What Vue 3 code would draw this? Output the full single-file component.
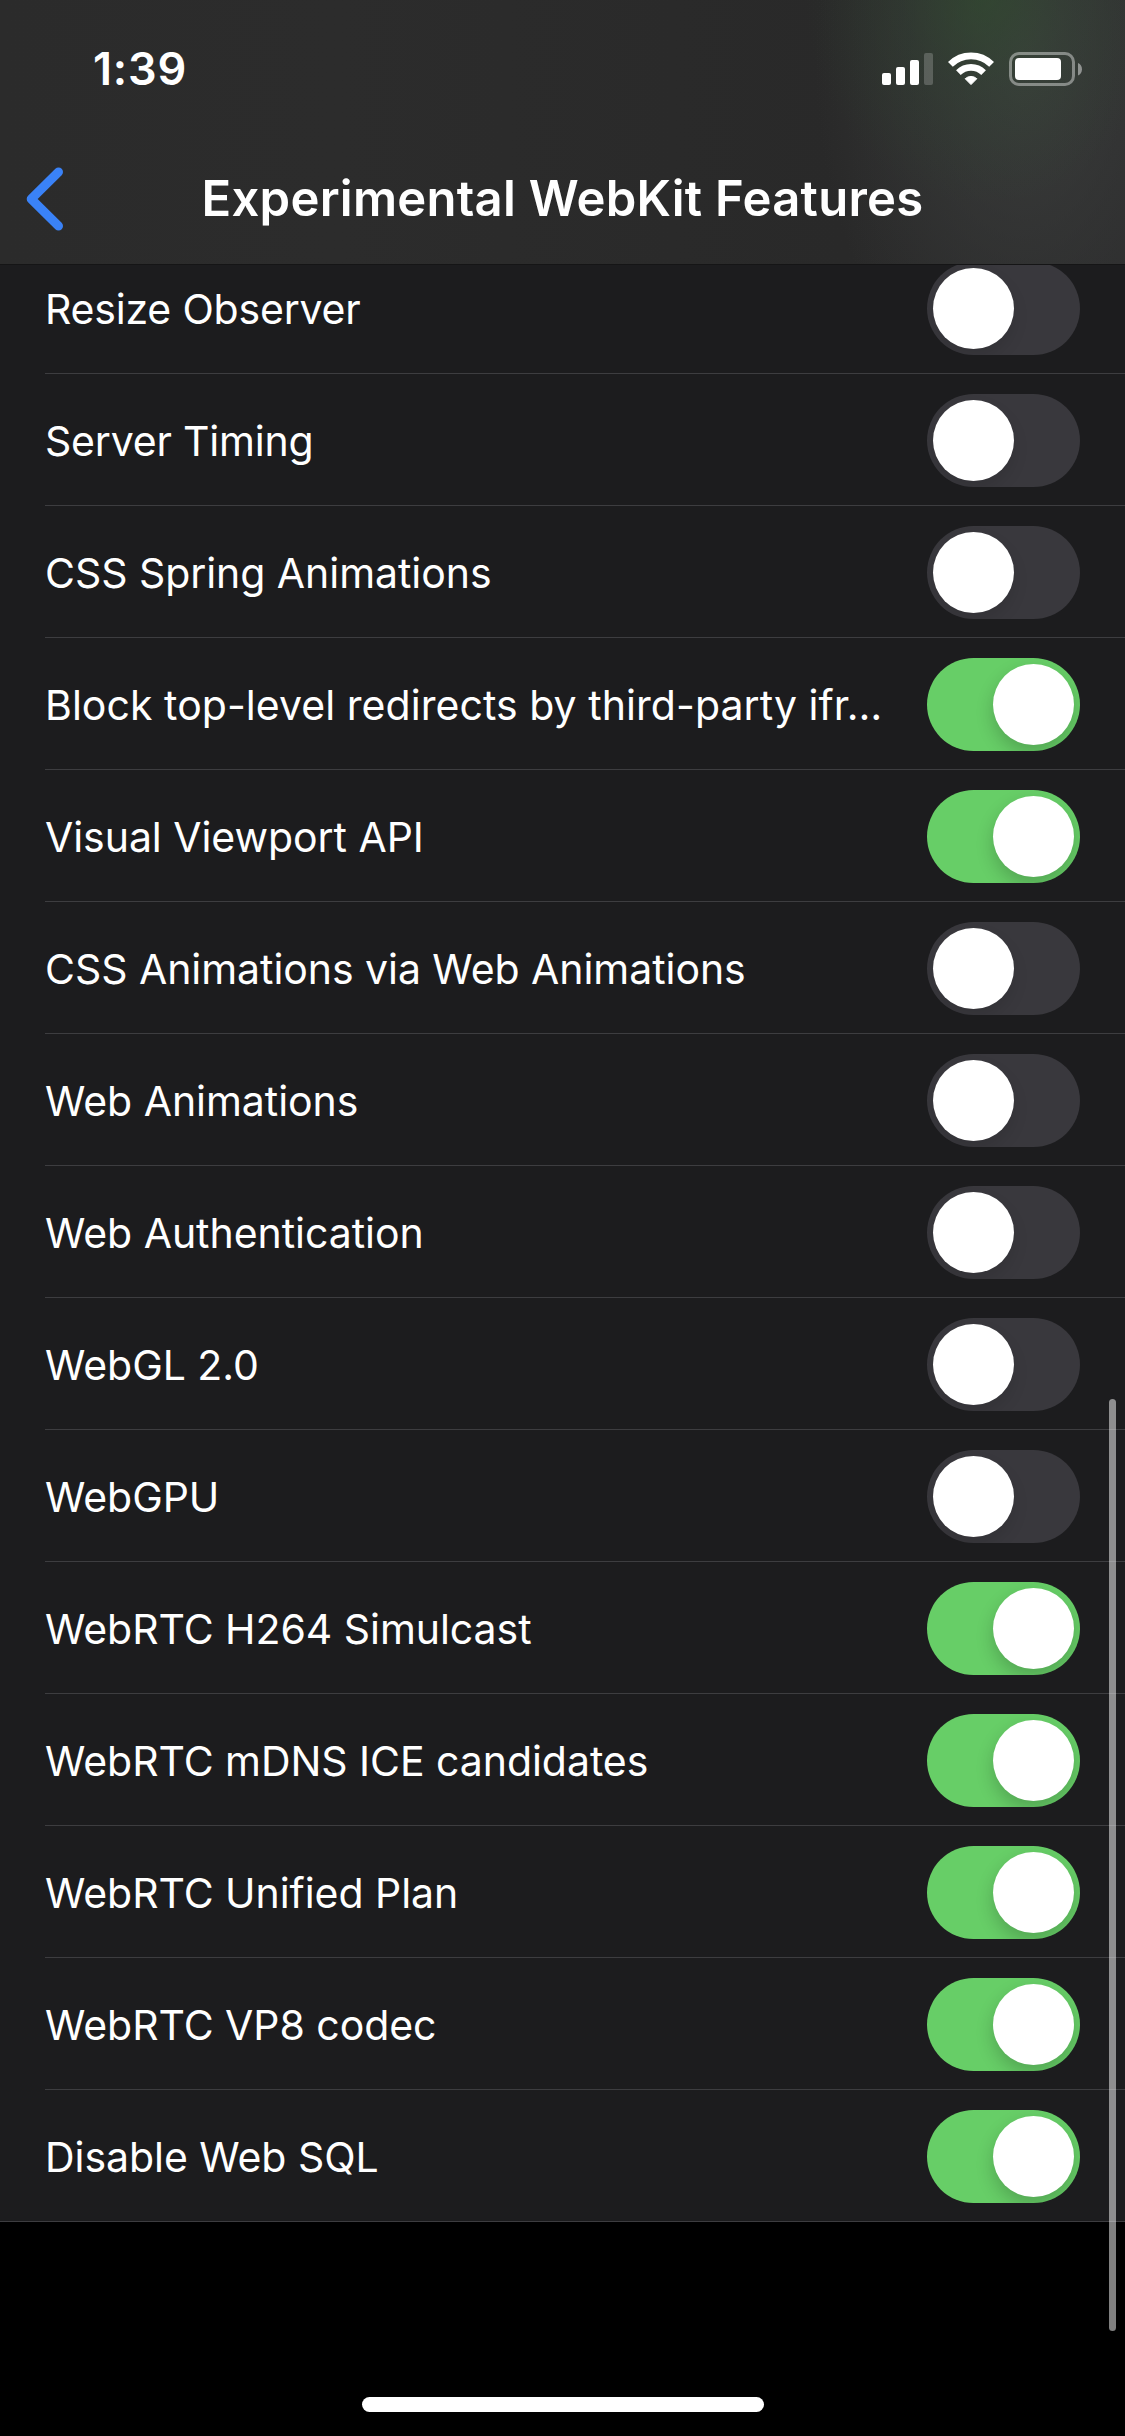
<script setup>
import { ref } from 'vue'

const features = ref([
  { name: 'Resize Observer', on: false, fit: 'tight' },
  { name: 'Server Timing', on: false, fit: 'tight' },
  { name: 'CSS Spring Animations', on: false },
  { name: 'Block top-level redirects by third-party ifr…', on: true, fit: 'loose' },
  { name: 'Visual Viewport API', on: true },
  { name: 'CSS Animations via Web Animations', on: false },
  { name: 'Web Animations', on: false },
  { name: 'Web Authentication', on: false },
  { name: 'WebGL 2.0', on: false },
  { name: 'WebGPU', on: false },
  { name: 'WebRTC H264 Simulcast', on: true },
  { name: 'WebRTC mDNS ICE candidates', on: true },
  { name: 'WebRTC Unified Plan', on: true },
  { name: 'WebRTC VP8 codec', on: true },
  { name: 'Disable Web SQL', on: true },
])
</script>

<template>
  <div class="screen">
    <header class="header">
      <div class="status">
        <span class="time">1:39</span>
        <div class="status-icons">
          <svg width="51" height="34" viewBox="0 0 51 34" fill="#fff">
            <rect x="0" y="21" width="9" height="12" rx="2" />
            <rect x="14" y="15" width="9" height="18" rx="2" />
            <rect x="28" y="8" width="9" height="25" rx="2" />
            <rect x="42" y="1" width="9" height="32" rx="2" opacity="0.2" />
          </svg>
          <svg width="46" height="34" viewBox="0 0 46 34" fill="none" stroke="#fff">
            <path d="M2.4 12.4A29.2 29.2 0 0 1 43.6 12.4" stroke-width="6.8" />
            <path d="M10.4 20.6A17.9 17.9 0 0 1 35.6 20.6" stroke-width="6.6" />
            <path
              d="M23 32.6 17.2 26.7A8.6 8.6 0 0 1 28.8 26.7Z"
              fill="#fff"
              stroke-width="1"
              stroke-linejoin="round"
            />
          </svg>
          <svg width="73" height="34" viewBox="0 0 73 34">
            <rect
              x="1.5"
              y="1.5"
              width="63"
              height="31"
              rx="8.5"
              fill="none"
              stroke="#fff"
              stroke-opacity="0.4"
              stroke-width="3"
            />
            <rect x="6" y="6" width="46" height="22" rx="4" fill="#fff" />
            <path d="M69 11C74.3 13 74.3 21.500 69 23.500Z" fill="#fff" fill-opacity="0.45" />
          </svg>
        </div>
      </div>
      <nav class="nav">
        <svg class="back" width="38" height="64" viewBox="0 0 38 64">
          <path
            d="M32.500 5 5.200 32 32.500 59"
            fill="none"
            stroke="#3a82f7"
            stroke-width="9"
            stroke-linecap="round"
            stroke-linejoin="round"
          />
        </svg>
        <h1 class="title">Experimental WebKit Features</h1>
      </nav>
    </header>

    <main class="viewport">
      <ul class="list">
        <li v-for="item in features" :key="item.name" class="row">
          <div class="cell">
            <span class="label" :class="item.fit">{{ item.name }}</span>
            <button
              class="toggle"
              :class="{ on: item.on }"
              role="switch"
              :aria-checked="item.on"
              @click="item.on = !item.on"
            >
              <span class="knob"></span>
            </button>
          </div>
        </li>
      </ul>
    </main>

    <div class="scrollbar"></div>
    <footer class="home"><span class="home-bar"></span></footer>
  </div>
</template>

<style>
body {
  background: #000;
}
</style>

<style scoped>
.screen {
  position: relative;
  display: flex;
  flex-direction: column;
  width: 1125px;
  height: 2436px;
  overflow: hidden;
  background: #000;
  color: #fff;
  font-family: Inter, 'Liberation Sans', sans-serif;
}

.header {
  flex: none;
  box-sizing: border-box;
  height: 265px;
  border-bottom: 1px solid #151516;
  background:
    radial-gradient(ellipse 180px 210px at 985px -5px, rgba(46, 82, 44, 0.5), rgba(46, 76, 48, 0.24) 45%, rgba(44, 66, 46, 0) 100%),
    radial-gradient(ellipse 210px 350px at 1025px 60px, rgba(62, 65, 63, 0.8), rgba(58, 60, 59, 0.55) 45%, rgba(44, 44, 44, 0) 100%),
    linear-gradient(90deg, #2b2b2b, #2c2c2c 30%, #292929 75%, #2c2c2d);
}

.status {
  display: flex;
  align-items: center;
  justify-content: space-between;
  box-sizing: border-box;
  height: 132px;
  padding: 6px 43px 0 93px;
}

.time {
  font-size: 45px;
  font-weight: 600;
  line-height: 54px;
  letter-spacing: 0.8px;
}

.status-icons {
  display: flex;
  gap: 15px;
}

.status-icons svg,
.back {
  display: block;
}

.nav {
  display: grid;
  grid-template-columns: 150px 1fr 150px;
  align-items: center;
  height: 132px;
}

.back {
  margin: 1px 0 0 26px;
}

.title {
  margin: 0;
  padding-top: 2px;
  font-size: 49px;
  font-weight: 600;
  line-height: 60px;
  letter-spacing: 0.26px;
  text-align: center;
  white-space: nowrap;
}

.viewport {
  flex: none;
  height: 1957px;
  overflow: hidden;
  background: #1c1c1e;
}

.list {
  margin: -23px 0 0;
  padding: 0;
  list-style: none;
}

.row {
  padding-left: 45px;
}

.row:last-child {
  padding-left: 0;
  border-bottom: 1px solid #3d3d40;
}

.row:last-child .cell {
  border-bottom: 0;
  padding-left: 45px;
  height: 131px;
}

.cell {
  display: flex;
  align-items: center;
  justify-content: space-between;
  box-sizing: border-box;
  height: 132px;
  padding: 2px 45px 0 0;
  border-bottom: 1px solid #3d3d40;
}

.label {
  padding-top: 1px;
  font-size: 41px;
  line-height: 50px;
  letter-spacing: -0.05px;
  white-space: nowrap;
}

.label.tight {
  letter-spacing: -0.19px;
}

.label.loose {
  letter-spacing: 0.05px;
}

.toggle {
  flex: none;
  display: flex;
  box-sizing: border-box;
  width: 153px;
  height: 93px;
  padding: 6px;
  border: 0;
  border-radius: 46.5px;
  background: #39383d;
  overflow: hidden;
}

.toggle.on {
  justify-content: flex-end;
  background: #67ce67;
}

.knob {
  width: 81px;
  height: 81px;
  border-radius: 50%;
  background: #fff;
  box-shadow: 0 8px 16px rgba(0, 0, 0, 0.1);
}

.on .knob {
  box-shadow: 0 8px 18px rgba(0, 0, 0, 0.2);
}

.scrollbar {
  position: absolute;
  top: 1399px;
  right: 9px;
  width: 7px;
  height: 932px;
  border-radius: 3.5px;
  background: rgba(255, 255, 255, 0.5);
}

.home {
  flex: 1;
  display: flex;
  align-items: flex-end;
  justify-content: center;
  padding-bottom: 24px;
}

.home-bar {
  width: 402px;
  height: 15px;
  margin-left: 1px;
  border-radius: 7.5px;
  background: #fff;
}
</style>
